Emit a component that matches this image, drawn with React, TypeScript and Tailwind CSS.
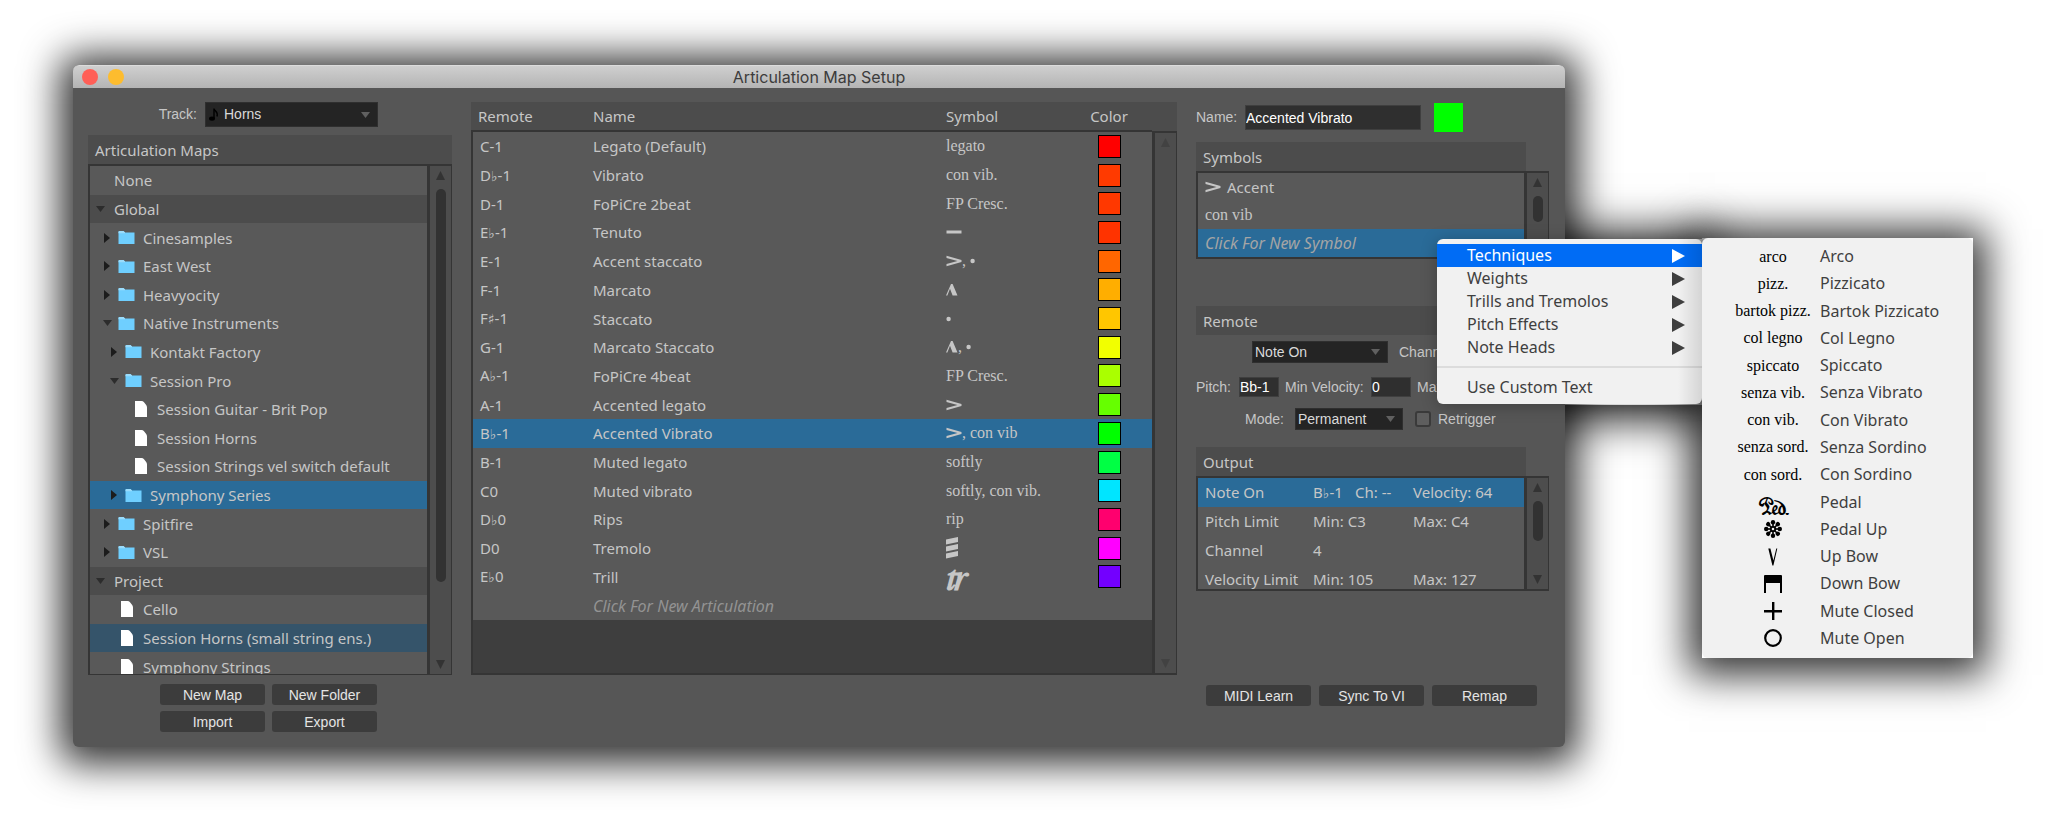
import React from "react";

const listFont = "font-['Noto_Sans','DejaVu_Sans',sans-serif] text-[15px] leading-5 text-[#c6c6c6]";
const uiFont = "font-['Liberation_Sans',Arial,sans-serif] text-[14px]";
const notationFont = "font-['Liberation_Serif','Times_New_Roman',serif] text-[16px] leading-5";

type IconProps = { className?: string };

const Accent = () => (
  <svg width="16" height="12" viewBox="0 0 16 12" aria-label="accent" className="inline-block">
    <path d="M0.5 0.8 15.5 5v2L0.5 11.2V9L11.5 6 0.5 3z" fill="currentColor" />
  </svg>
);
const Tenuto = () => (
  <svg width="16" height="12" viewBox="0 0 16 12" aria-label="tenuto" className="inline-block">
    <rect x="0.5" y="4.5" width="15" height="3" fill="currentColor" />
  </svg>
);
const Dot = () => (
  <svg width="6" height="12" viewBox="0 0 6 12" aria-label="staccato" className="inline-block">
    <circle cx="2.6" cy="6" r="2.2" fill="currentColor" />
  </svg>
);
const Marcato = () => (
  <svg width="12" height="12" viewBox="0 0 12 12" aria-label="marcato" className="inline-block">
    <path d="M0 11.5 5 0h1.6L11.5 11.5H6.6L4 4.8 1.4 11.5z" fill="currentColor" />
  </svg>
);
const Tremolo = () => (
  <svg width="12" height="22" viewBox="0 0 12 22" aria-label="tremolo" className="block">
    <path d="M0 2.5 12 0v5L0 7.5zM0 9.5 12 7v5L0 14.5zM0 16.5 12 14v5L0 21.5z" fill="currentColor" />
  </svg>
);
const Folder = () => (
  <svg width="17" height="13" viewBox="0 0 17 13" aria-hidden="true">
    <path d="M0.5 1Q0.5 0 1.5 0H5.5L7 1.5H16.5V13H0.5z" fill="#6fcfff" />
    <path d="M0.5 1Q0.5 0 1.5 0H5.5L7 1.5V2.2H0.5z" fill="#9bdcfb" />
  </svg>
);
const File = () => (
  <svg width="12" height="16" viewBox="0 0 12 16" aria-hidden="true">
    <path d="M0 0H6.5Q8 0 9 1.2L11.2 4Q12 5 12 6.5V16H0z" fill="#fff" />
  </svg>
);
const Down = ({ className = "" }: IconProps) => (
  <svg width="9" height="6" viewBox="0 0 9 6" className={className} aria-hidden="true">
    <path d="M0 0H9L4.5 6z" fill="currentColor" />
  </svg>
);
const Right = ({ className = "" }: IconProps) => (
  <svg width="6" height="10" viewBox="0 0 6 10" className={className} aria-hidden="true">
    <path d="M0 0 6 5 0 10z" fill="currentColor" />
  </svg>
);
const Comma = () => <span className="mr-1">,</span>;

function Scrollbar({ thumb, dim = false }: { thumb?: string; dim?: boolean }) {
  const tone = dim ? "text-[#424242]" : "text-[#333]";
  return (
    <div className="flex w-[25px] shrink-0 flex-col items-center border-r border-l-3 border-[#353535] bg-[#4d4d4d] py-[5px]">
      <svg width="9" height="9" viewBox="0 0 9 9" className={tone} aria-hidden="true">
        <path d="M4.5 0 9 9H0z" fill="currentColor" />
      </svg>
      {thumb && <div className={`mt-[9px] w-[10px] rounded-full bg-[#323232] ${thumb}`} />}
      <svg width="9" height="9" viewBox="0 0 9 9" className={`mt-auto ${tone}`} aria-hidden="true">
        <path d="M0 0H9L4.5 9z" fill="currentColor" />
      </svg>
    </div>
  );
}

type Node = { label: string; depth: number; kind?: "open" | "closed" | "file"; tone?: "group" | "active" | "current" };

const tree: Node[] = [
  { label: "None", depth: 0 },
  { label: "Global", depth: 0, kind: "open", tone: "group" },
  { label: "Cinesamples", depth: 1, kind: "closed" },
  { label: "East West", depth: 1, kind: "closed" },
  { label: "Heavyocity", depth: 1, kind: "closed" },
  { label: "Native Instruments", depth: 1, kind: "open" },
  { label: "Kontakt Factory", depth: 2, kind: "closed" },
  { label: "Session Pro", depth: 2, kind: "open" },
  { label: "Session Guitar - Brit Pop", depth: 3, kind: "file" },
  { label: "Session Horns", depth: 3, kind: "file" },
  { label: "Session Strings vel switch default", depth: 3, kind: "file" },
  { label: "Symphony Series", depth: 2, kind: "closed", tone: "active" },
  { label: "Spitfire", depth: 1, kind: "closed" },
  { label: "VSL", depth: 1, kind: "closed" },
  { label: "Project", depth: 0, kind: "open", tone: "group" },
  { label: "Cello", depth: 1, kind: "file" },
  { label: "Session Horns (small string ens.)", depth: 1, kind: "file", tone: "current" },
  { label: "Symphony Strings", depth: 1, kind: "file" },
];

const indents = ["pl-[3px]", "pl-[10px]", "pl-[17px]", "pl-[24px]"];
const tones = { group: "bg-[#4c4c4c]", active: "bg-[#2a6b98]", current: "bg-[#35546a]" };

function TreeRow({ node }: { node: Node }) {
  return (
    <li className={`flex items-center ${indents[node.depth]} ${node.tone ? tones[node.tone] : ""}`}>
      <span className="flex w-[14px] shrink-0 justify-center">
        {node.kind === "open" && <Down className="text-[#2c2c2c]" />}
        {node.kind === "closed" && <Right className="text-[#1c1c1c]" />}
      </span>
      {node.depth === 0 ? (
        <span className="ml-[7px]">{node.label}</span>
      ) : (
        <>
          <span className="ml-1 flex w-[17px] shrink-0 justify-center">{node.kind === "file" ? <File /> : <Folder />}</span>
          <span className="ml-2 whitespace-nowrap">{node.label}</span>
        </>
      )}
    </li>
  );
}

type Row = { note: string; name: string; symbol: React.ReactNode; color: string; selected?: boolean };

const rows: Row[] = [
  { note: "C-1", name: "Legato (Default)", symbol: "legato", color: "bg-[#ff0000]" },
  { note: "D♭-1", name: "Vibrato", symbol: "con vib.", color: "bg-[#ff3a00]" },
  { note: "D-1", name: "FoPiCre 2beat", symbol: "FP Cresc.", color: "bg-[#ff3800]" },
  { note: "E♭-1", name: "Tenuto", symbol: <Tenuto />, color: "bg-[#ff3300]" },
  { note: "E-1", name: "Accent staccato", symbol: <><Accent /><Comma /><Dot /></>, color: "bg-[#ff6600]" },
  { note: "F-1", name: "Marcato", symbol: <Marcato />, color: "bg-[#ffae00]" },
  { note: "F♯-1", name: "Staccato", symbol: <Dot />, color: "bg-[#ffc600]" },
  { note: "G-1", name: "Marcato Staccato", symbol: <><Marcato /><Comma /><Dot /></>, color: "bg-[#f2ff00]" },
  { note: "A♭-1", name: "FoPiCre 4beat", symbol: "FP Cresc.", color: "bg-[#aaff00]" },
  { note: "A-1", name: "Accented legato", symbol: <Accent />, color: "bg-[#66ff00]" },
  { note: "B♭-1", name: "Accented Vibrato", symbol: <><Accent /><span>,&nbsp;con vib</span></>, color: "bg-[#00ff00]", selected: true },
  { note: "B-1", name: "Muted legato", symbol: "softly", color: "bg-[#00ff44]" },
  { note: "C0", name: "Muted vibrato", symbol: "softly, con vib.", color: "bg-[#00e5ff]" },
  { note: "D♭0", name: "Rips", symbol: "rip", color: "bg-[#ff006e]" },
  { note: "D0", name: "Tremolo", symbol: <Tremolo />, color: "bg-[#ff00ff]" },
  { note: "E♭0", name: "Trill", symbol: <span className="text-[38px] font-bold">𝆖</span>, color: "bg-[#7300ff]" },
];

function Note({ value }: { value: string }) {
  const parts = value.split(/([♭♯])/);
  return (
    <>
      {parts.map((part, i) =>
        part === "♭" || part === "♯" ? (
          <span key={i} className="font-['DejaVu_Sans',sans-serif] text-[14px]">{part}</span>
        ) : (
          part
        ),
      )}
    </>
  );
}

function ArticulationTable() {
  return (
    <section className="min-w-0 flex-1 self-start pt-[14px]">
      <div className="flex border-b-2 border-[#353535] bg-[#3e3e3e]">
        <div className="min-w-0 flex-1">
          <table className={`h-[518px] w-full table-fixed border-separate border-spacing-0 ${listFont}`}>
            <colgroup>
              <col className="w-[122px]" />
              <col />
              <col className="w-[120px]" />
              <col className="w-[86px]" />
            </colgroup>
            <thead>
              <tr className="h-[30px] bg-[#4c4c4c] text-left">
                <th className="border-b-2 border-[#353535] py-0 pl-[7px] font-normal">Remote</th>
                <th className="border-b-2 border-[#353535] py-0 font-normal">Name</th>
                <th className="border-b-2 border-[#353535] py-0 font-normal">Symbol</th>
                <th className="border-b-2 border-[#353535] py-0 text-center font-normal">Color</th>
              </tr>
            </thead>
            <tbody>
              {rows.map((row) => (
                <tr key={row.note} className={`h-[28px] ${row.selected ? "bg-[#2a6b98]" : "bg-[#595959]"}`}>
                  <td className="border-l-2 border-[#353535] py-0 pl-[7px]"><Note value={row.note} /></td>
                  <td className="py-0">{row.name}</td>
                  <td className="py-0">
                    <div className={`flex h-6 items-center whitespace-nowrap ${notationFont}`}>{row.symbol}</div>
                  </td>
                  <td className="py-0">
                    <button aria-label={`${row.name} color`} className={`mx-auto block h-[23px] w-[23px] border border-black ${row.color}`} />
                  </td>
                </tr>
              ))}
              <tr className="h-[28px] bg-[#595959]">
                <td className="border-l-2 border-[#353535] py-0" />
                <td colSpan={3} className="py-0 text-[16px] text-[#939393] italic">Click For New Articulation</td>
              </tr>
            </tbody>
          </table>
          <div className="h-[53px] border-l-2 border-[#353535]" />
        </div>
        <div className="flex flex-col">
          <div className="h-[31px] shrink-0 border-b-2 border-[#353535] bg-[#4c4c4c]" />
          <div className="flex flex-1"><Scrollbar dim /></div>
        </div>
      </div>
    </section>
  );
}

function PushButton({ children }: { children: string }) {
  return (
    <button className={`h-[21px] w-[105px] rounded-[3px] bg-[#3c3c3c] text-center leading-[20px] text-[#e4e4e4] ${uiFont}`}>
      {children}
    </button>
  );
}

function Select({ id, value, size, children, icon }: { id: string; value: string; size: string; children?: string; icon?: React.ReactNode }) {
  return (
    <div className={`relative flex items-center ${size}`}>
      <select
        id={id}
        defaultValue={value}
        aria-label={children}
        className={`h-full w-full appearance-none border border-[#2f2f2f] bg-[#242424] text-[#dadada] ${icon ? "pl-[18px]" : "pl-[2px]"} ${uiFont}`}
      >
        <option>{value}</option>
      </select>
      {icon && <span className="absolute left-1">{icon}</span>}
      <Down className="absolute right-[8px] text-[#606060]" />
    </div>
  );
}

function MapsPanel() {
  return (
    <section className="flex w-[364px] shrink-0 flex-col pt-[14px] pb-[15px]">
      <div className="flex items-center justify-end gap-2 pr-[74px]">
        <label htmlFor="track" className={`text-[#c6c6c6] ${uiFont}`}>Track:</label>
        <Select
          id="track"
          value="Horns"
          size="h-[25px] w-[173px]"
          icon={
            <svg width="10" height="13" viewBox="0 0 10 13" aria-hidden="true">
              <ellipse cx="3" cy="10.6" rx="3" ry="2.2" fill="#000" />
              <path d="M5 10.5V0.5C5.5 3.5 9.5 3.5 8 8.5" fill="none" stroke="#000" strokeWidth="1.4" />
            </svg>
          }
        />
      </div>
      <h2 className={`mt-2 bg-[#4c4c4c] pt-[5px] pb-[4px] pl-[7px] ${listFont}`}>Articulation Maps</h2>
      <div className="flex h-[511px] border-t-2 border-b border-l-2 border-[#353535]">
        <div className="min-w-0 flex-1 overflow-hidden bg-[#595959]">
          <ul className={`grid h-[515px] auto-rows-fr ${listFont}`}>
            {tree.map((node) => <TreeRow key={node.label} node={node} />)}
          </ul>
        </div>
        <Scrollbar thumb="h-[393px]" />
      </div>
      <div className="mt-[9px] grid grid-cols-[105px_105px] justify-end gap-x-[7px] gap-y-[6px] pr-[75px]">
        <PushButton>New Map</PushButton>
        <PushButton>New Folder</PushButton>
        <PushButton>Import</PushButton>
        <PushButton>Export</PushButton>
      </div>
    </section>
  );
}

const PedalUp = () => (
  <svg width="18" height="18" viewBox="0 0 18 18" aria-label="pedal up">
    <g fill="#000">
      {[0, 45, 90, 135, 180, 225, 270, 315].map((a) => (
        <g key={a} transform={`rotate(${a} 9 9)`}>
          <circle cx="9" cy="2.2" r="2.2" />
          <rect x="8.2" y="3" width="1.6" height="4" />
        </g>
      ))}
    </g>
    <circle cx="9" cy="9" r="2.2" fill="none" stroke="#000" strokeWidth="1.8" />
  </svg>
);
const UpBow = () => (
  <svg width="10" height="18" viewBox="0 0 10 18" aria-label="up bow">
    <path d="M0.3 0.5H2.4L5.4 12.5 8.3 0.5H9.3L5.4 17.5H4.4z" fill="#000" />
  </svg>
);
const DownBow = () => (
  <svg width="18" height="18" viewBox="0 0 18 18" aria-label="down bow">
    <path d="M0 1Q0 0 1 0H17Q18 0 18 1V18H16V8H2V18H0z" fill="#000" />
  </svg>
);
const MuteClosed = () => (
  <svg width="18" height="18" viewBox="0 0 18 18" aria-label="mute closed">
    <path d="M8 0H10.4V8H18V10.4H10.4V18H8V10.4H0V8H8z" fill="#000" />
  </svg>
);
const MuteOpen = () => (
  <svg width="18" height="18" viewBox="0 0 18 18" aria-label="mute open">
    <circle cx="9" cy="9" r="7.8" fill="none" stroke="#000" strokeWidth="2.2" />
  </svg>
);

const techniques: { label: string; symbol: React.ReactNode }[] = [
  { label: "Arco", symbol: "arco" },
  { label: "Pizzicato", symbol: "pizz." },
  { label: "Bartok Pizzicato", symbol: "bartok pizz." },
  { label: "Col Legno", symbol: "col legno" },
  { label: "Spiccato", symbol: "spiccato" },
  { label: "Senza Vibrato", symbol: "senza vib." },
  { label: "Con Vibrato", symbol: "con vib." },
  { label: "Senza Sordino", symbol: "senza sord." },
  { label: "Con Sordino", symbol: "con sord." },
  { label: "Pedal", symbol: <span className="-mb-3 block pt-3 text-[48px] leading-3">𝆮</span> },
  { label: "Pedal Up", symbol: <PedalUp /> },
  { label: "Up Bow", symbol: <UpBow /> },
  { label: "Down Bow", symbol: <DownBow /> },
  { label: "Mute Closed", symbol: <MuteClosed /> },
  { label: "Mute Open", symbol: <MuteOpen /> },
];

const menuFont = "font-['Noto_Sans','DejaVu_Sans',sans-serif] text-[16px] leading-[23px]";
const castShadow = "shadow-[0_4px_38px_13px_rgba(0,0,0,0.8)]";

function SymbolMenu() {
  return (
    <>
      <div className={`absolute top-[66px] left-[239px] -z-10 h-[166px] w-[265px] ${castShadow}`} />
      <div className={`absolute top-[65px] left-[504px] -z-10 h-[420px] w-[271px] ${castShadow}`} />
      <div className="absolute top-[66px] left-[239px] z-10 w-[265px] rounded-[6px] bg-[#f1f1f1] pt-[5px] pb-[5px] shadow-[0_2px_16px_rgba(0,0,0,0.25)]">
        <ul role="menu" className={`text-[#3f3f3f] ${menuFont}`}>
          {["Techniques", "Weights", "Trills and Tremolos", "Pitch Effects", "Note Heads"].map((item, i) => (
            <li key={item} role="none">
              <button
                role="menuitem"
                className={`flex h-[23px] w-full items-center justify-between pr-[17px] pl-[30px] ${i === 0 ? "bg-[#006cf5] text-white" : ""}`}
              >
                {item}
                <svg width="13" height="14" viewBox="0 0 13 14" aria-hidden="true">
                  <path d="M0 0 13 7 0 14z" fill="currentColor" />
                </svg>
              </button>
            </li>
          ))}
          <li role="separator" className="mt-[7px] mb-[8px] h-[2px] bg-[#dcdcdc]" />
          <li role="none">
            <button role="menuitem" className="block h-[23px] w-full pl-[30px] text-left">Use Custom Text</button>
          </li>
        </ul>
        <div className="absolute inset-y-0 right-0 w-6 rounded-r-[6px] bg-linear-to-r from-transparent to-black/12" />
        <div className="absolute -top-px left-[265px] w-[271px] rounded-[6px] bg-[#f1f1f1] pt-[5px] pb-[6px]">
          <ul role="menu" className={`grid h-[409px] auto-rows-fr text-[#3f3f3f] ${menuFont}`}>
            {techniques.map((t) => (
              <li key={t.label} role="none" className="flex">
                <button role="menuitem" className="flex w-full items-center pl-6 text-left">
                  <span className={`flex w-[94px] shrink-0 justify-center whitespace-nowrap text-black ${notationFont}`}>{t.symbol}</span>
                  {t.label}
                </button>
              </li>
            ))}
          </ul>
        </div>
      </div>
    </>
  );
}

const field = "border border-[#3f3f3f] bg-[#2f2f2f] text-white outline-none";

function DetailPanel() {
  const label = `text-[#c6c6c6] whitespace-nowrap ${uiFont}`;
  const heading = `mr-[23px] bg-[#4c4c4c] pt-[5px] pb-[4px] pl-[7px] ${listFont}`;
  return (
    <section className="flex w-[353px] shrink-0 flex-col pt-[15px] pb-[41px]">
      <div className="flex h-[29px] items-center">
        <label htmlFor="name" className={`w-[49px] ${label}`}>Name:</label>
        <input id="name" defaultValue="Accented Vibrato" className={`h-[25px] w-[176px] ${field} ${uiFont}`} />
        <button aria-label="Articulation color" className="ml-[13px] h-[29px] w-[29px] bg-[#00ff00]" />
      </div>

      <h2 className={`mt-[10px] ${heading}`}>Symbols</h2>
      <div className="relative flex h-[88px] border-2 border-r-0 border-[#353535]">
        <ul className={`grid h-[84px] flex-1 auto-rows-fr bg-[#595959] ${listFont}`}>
          <li className="flex items-center gap-[6px] pl-[7px]"><Accent />Accent</li>
          <li className={`flex items-center pl-[7px] ${notationFont}`}>con vib</li>
          <li className="flex items-center bg-[#2a6b98] pl-[7px] text-[16px] text-[#a5a5a5] italic">Click For New Symbol</li>
        </ul>
        <Scrollbar thumb="h-[26px]" />
        <SymbolMenu />
      </div>

      <h2 className={`mt-[47px] ${heading}`}>Remote</h2>
      <div className="mt-[6px] flex items-center pl-[56px]">
        <Select id="trigger" value="Note On" size="h-[22px] w-[136px]">Trigger</Select>
        <label htmlFor="channel" className={`ml-[11px] ${label}`}>Channel:</label>
        <input id="channel" defaultValue="1" className={`ml-2 h-[20px] w-[40px] ${field} ${uiFont}`} />
      </div>
      <div className="mt-[14px] flex h-[20px] items-center">
        <label htmlFor="pitch" className={`w-[43px] ${label}`}>Pitch:</label>
        <input id="pitch" defaultValue="Bb-1" className={`h-[20px] w-[40px] ${field} ${uiFont}`} />
        <label htmlFor="minv" className={`ml-[6px] w-[86px] ${label}`}>Min Velocity:</label>
        <input id="minv" defaultValue="0" className={`h-[20px] w-[40px] ${field} ${uiFont}`} />
        <label htmlFor="maxv" className={`ml-[6px] w-[90px] ${label}`}>Max Velocity:</label>
        <input id="maxv" defaultValue="127" className={`h-[20px] w-[40px] ${field} ${uiFont}`} />
      </div>
      <div className="mt-[11px] flex items-center pl-[49px]">
        <label htmlFor="mode" className={`w-[50px] ${label}`}>Mode:</label>
        <Select id="mode" value="Permanent" size="h-[22px] w-[108px]" />
        <input id="retrigger" type="checkbox" className="ml-[12px] h-4 w-4 appearance-none rounded-[3px] border-2 border-[#3a3a3a] bg-[#5e5e5e]" />
        <label htmlFor="retrigger" className={`ml-[7px] ${label}`}>Retrigger</label>
      </div>

      <h2 className={`mt-[17px] ${heading}`}>Output</h2>
      <div className="flex h-[115px] border-2 border-r-0 border-[#353535]">
        <div className="min-w-0 flex-1 overflow-hidden bg-[#595959]">
          <table className={`h-[115px] w-full table-fixed border-collapse whitespace-nowrap ${listFont}`}>
            <colgroup>
              <col className="w-[115px]" />
              <col className="w-[42px]" />
              <col className="w-[58px]" />
              <col />
            </colgroup>
            <tbody>
              <tr className="h-[28px] bg-[#2a6b98]">
                <td className="py-0 pl-[7px]">Note On</td>
                <td className="py-0"><Note value="B♭-1" /></td>
                <td className="py-0">Ch: --</td>
                <td className="py-0">Velocity: 64</td>
              </tr>
              <tr className="h-[28px]">
                <td className="py-0 pl-[7px]">Pitch Limit</td>
                <td className="py-0" colSpan={2}>Min: C3</td>
                <td className="py-0">Max: C4</td>
              </tr>
              <tr className="h-[28px]">
                <td className="py-0 pl-[7px]">Channel</td>
                <td className="py-0" colSpan={3}>4</td>
              </tr>
              <tr className="h-[28px]">
                <td className="py-0 pl-[7px]">Velocity Limit</td>
                <td className="py-0" colSpan={2}>Min: 105</td>
                <td className="py-0">Max: 127</td>
              </tr>
            </tbody>
          </table>
        </div>
        <Scrollbar thumb="h-[40px]" />
      </div>

      <div className="mt-auto flex gap-2 pl-[10px]">
        <PushButton>MIDI Learn</PushButton>
        <PushButton>Sync To VI</PushButton>
        <PushButton>Remap</PushButton>
      </div>
    </section>
  );
}

export default function App() {
  return (
    <main className="isolate min-h-screen bg-white pt-[65px] pr-[483px] pb-[77px] pl-[73px]">
      <div className={`min-w-[1280px] rounded-[6px] bg-[#565656] ${castShadow}`}>
        <header className="relative flex h-[23px] items-center justify-center rounded-t-[6px] border-t border-[#dcdcdc] bg-linear-to-b from-[#cfcfcf] to-[#b4b4b4]">
          <div className="absolute left-[9px] flex gap-[10px]">
            <button aria-label="Close" className="h-4 w-4 rounded-full bg-[#ff5f57]" />
            <button aria-label="Minimize" className="h-4 w-4 rounded-full bg-[#fdbc2e]" />
          </div>
          <h1 className="font-['Inter',sans-serif] text-[16px] leading-5 text-[#3c3c3c]">Articulation Map Setup</h1>
        </header>
        <div className="flex gap-[19px] pr-4 pl-[15px]">
          <MapsPanel />
          <ArticulationTable />
          <DetailPanel />
        </div>
      </div>
    </main>
  );
}
